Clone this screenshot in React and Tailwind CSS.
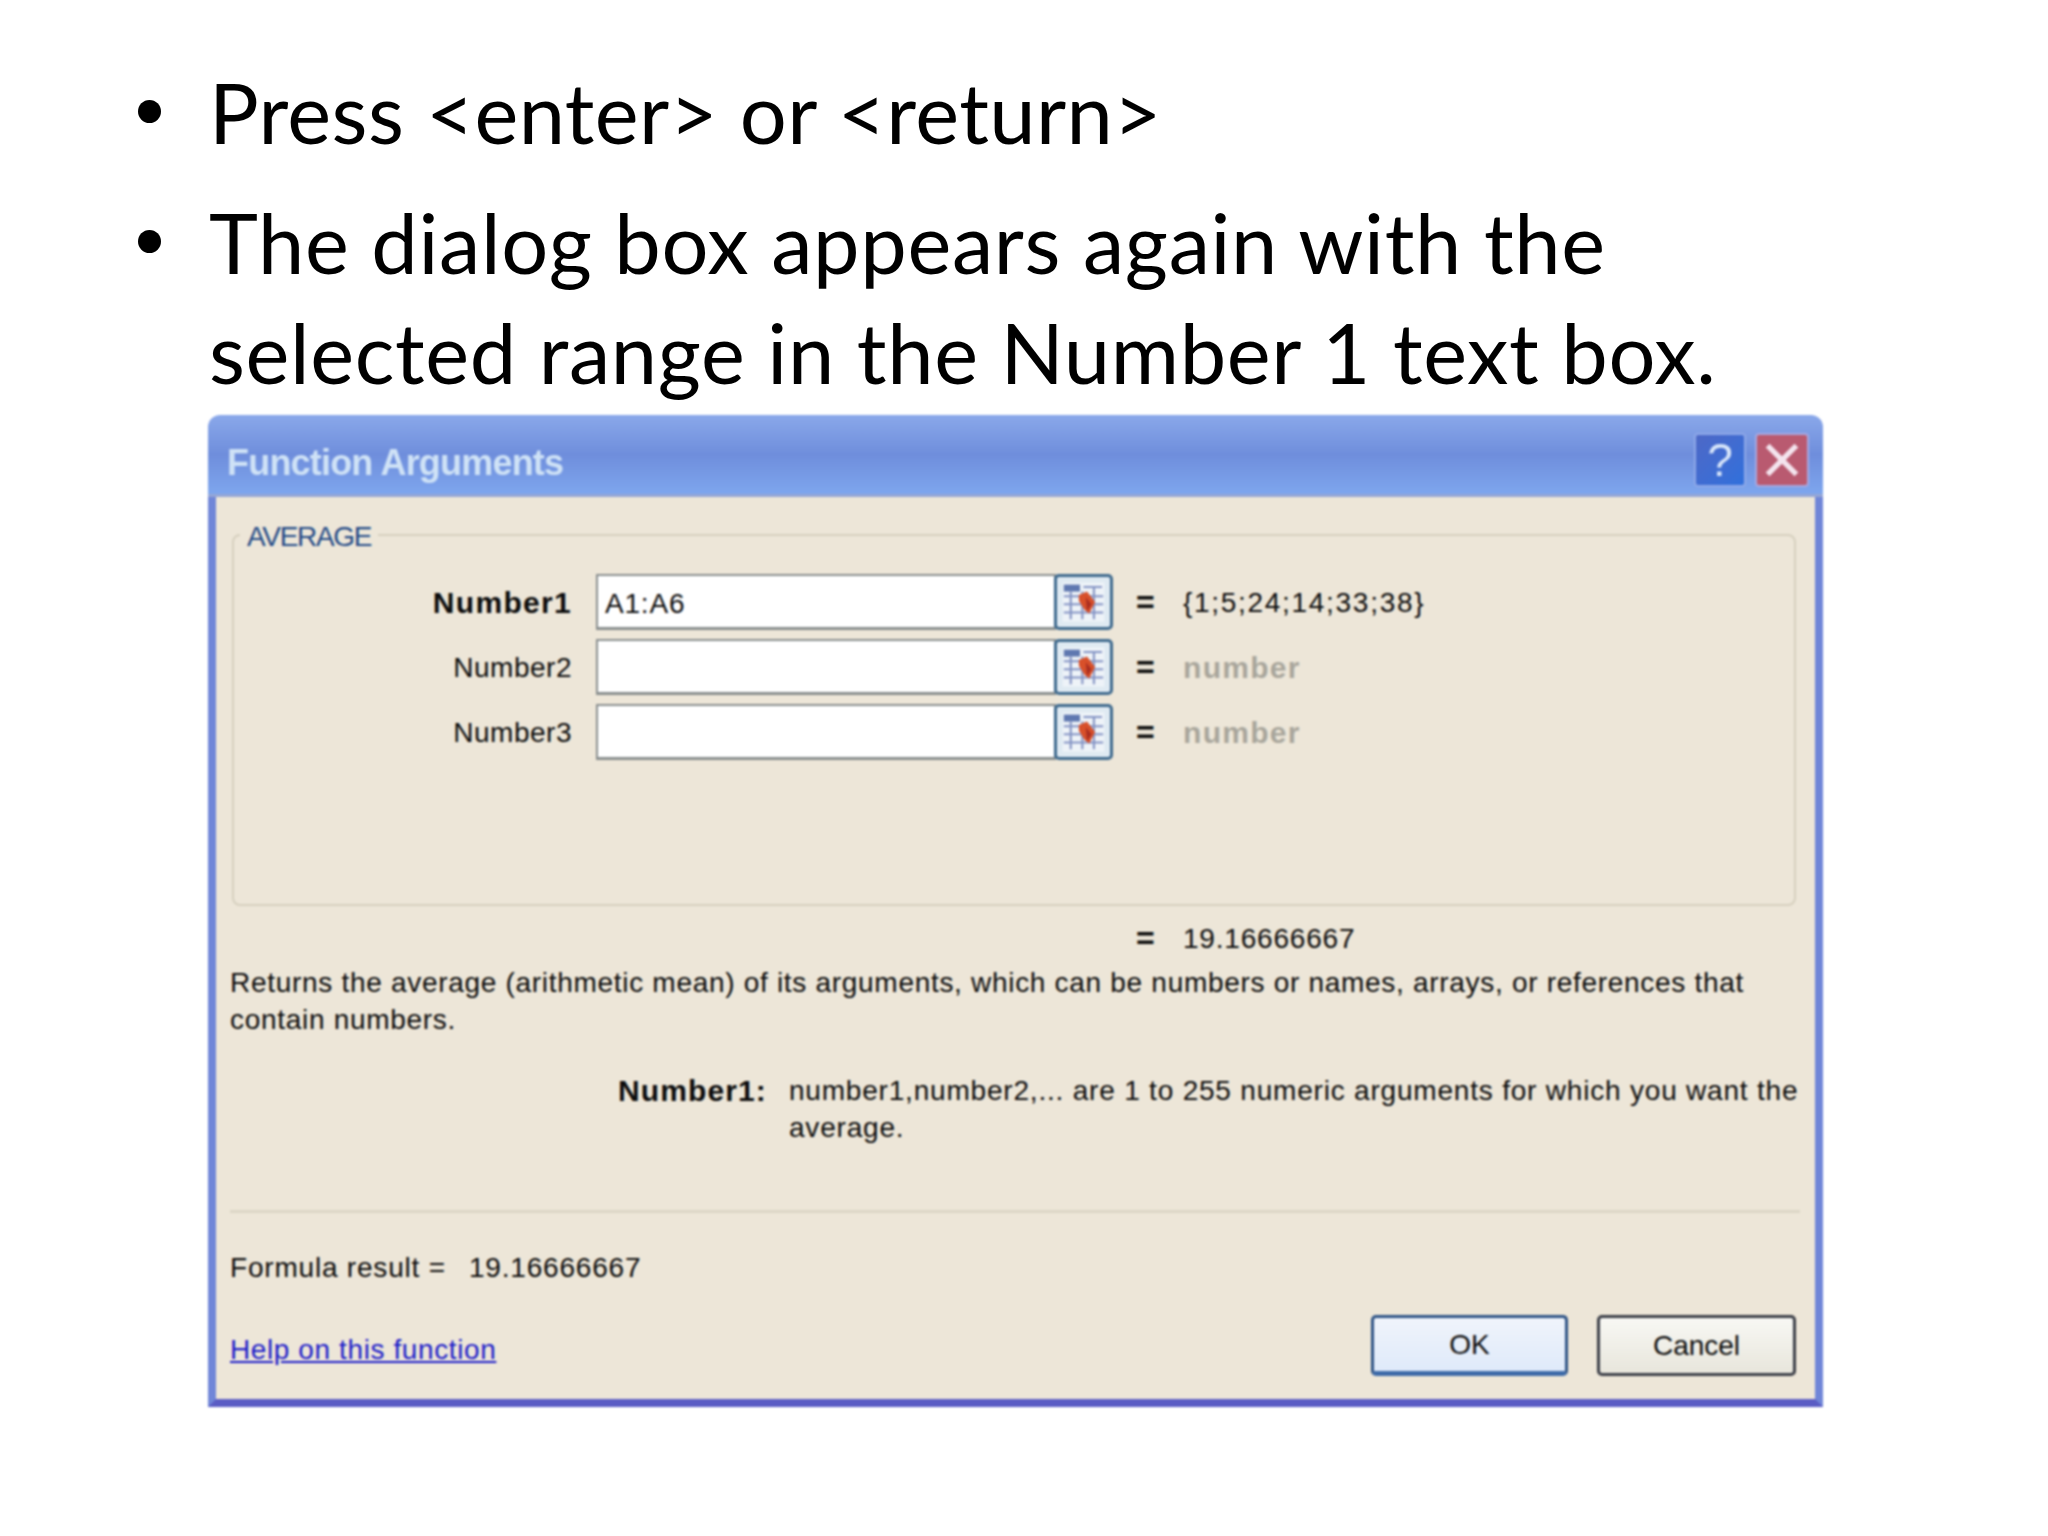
import React from 'react';

const Bullet = ({ children, className }) => (
  <div className={`flex ${className}`}>
    <span className="w-[75px] shrink-0">
      <span className="block ml-[4px] mt-[43px] w-[23px] h-[23px] rounded-full bg-black" />
    </span>
    <p>{children}</p>
  </div>
);

const RefButton = () => (
  <button className="w-[59px] h-[56px] shrink-0 -ml-[2px] rounded-[5px] border-[3px] border-[#3f6a8e] bg-[#dfeaf2] p-[3px]">
    <svg viewBox="0 0 40 38" className="w-full h-full">
      <rect x="2" y="2" width="36" height="34" fill="#eef3f8" />
      <rect x="3" y="4" width="14" height="6" fill="#5f78b0" />
      <path d="M20 6h16M3 14h34M3 21h34M3 28h34M9 10v24M19 10v24M29 6v28" stroke="#8494c4" strokeWidth="1.8" fill="none" />
      <path d="M16 13l7-3 7 9-5 10-4-3-5-8z" fill="#d8502a" />
      <path d="M22 15l5 6-4 6z" fill="#a92e22" />
    </svg>
  </button>
);

const ArgRow = ({ label, bold, value, placeholder }) => (
  <div className="flex items-center h-[56px]">
    <span className={`w-[338px] shrink-0 text-right ${bold ? 'font-bold text-[30px] tracking-[1.3px]' : 'tracking-[0.5px]'}`}>{label}</span>
    <div className="ml-[24px] w-[460px] h-[56px] shrink-0 bg-white border-[2px] border-[#8a8f8f] border-b-[3px] flex items-center pl-[7px] pt-[4px] tracking-[0.8px]">
      {value}
    </div>
    <RefButton />
    <span className="ml-[23px] w-[47px] shrink-0 font-bold text-[32px]">=</span>
    {placeholder ? (
      <span className="text-[#a9a69c] font-bold text-[30px] tracking-[1.3px]">number</span>
    ) : (
      <span className="tracking-[1.7px]">{'{1;5;24;14;33;38}'}</span>
    )}
  </div>
);

export default function App() {
  return (
    <div className="w-[2048px] h-[1536px] bg-white overflow-hidden font-['Lato','Noto_Sans',sans-serif] text-black">
      <div className="pt-[57px] pl-[134px] text-[83px] leading-[110px] tracking-[0.4px]">
        <Bullet>Press &lt;enter&gt; or &lt;return&gt;</Bullet>
        <Bullet className="mt-[20px] tracking-[0.65px]">
          The dialog box appears again with the
          <br />
          selected range in the Number 1 text box.
        </Bullet>
      </div>

      {/* Dialog */}
      <div className="ml-[208px] mt-[8px] w-[1615px] h-[992px] flex flex-col blur-[0.8px] font-['Liberation_Sans',sans-serif] text-[28px] leading-[37px] text-[#0c0c0c]">
        <div className="h-[82px] shrink-0 rounded-t-[12px] bg-gradient-to-b from-[#8aa8ea] via-[#6f8edc] to-[#7ea6ee] border-b-[3px] border-[#95a6d6] flex items-center pt-[10px] pl-[19px] pr-[14px]">
          <span className="flex-1 pt-[6px] font-bold text-[36px] text-[#cfe2f6] tracking-[-0.8px]">Function Arguments</span>
          <button className="w-[52px] h-[54px] rounded-[4px] bg-gradient-to-br from-[#4d68c6] to-[#2f70dc] border-[2px] border-[#8ea8e8] text-[#d8e6fa] text-[46px] leading-none">?</button>
          <button className="ml-[9px] w-[54px] h-[54px] rounded-[4px] bg-[#b95a70] border-[2px] border-[#a8a8e0] flex items-center justify-center">
            <svg viewBox="0 0 30 30" className="w-[36px] h-[36px]">
              <path d="M3 3l24 24M27 3L3 27" stroke="#f4e4ee" strokeWidth="4.5" />
            </svg>
          </button>
        </div>

        <div className="flex-1 bg-[#ede6d8] border-x-[8px] border-b-[8px] border-x-[#7086d8] border-b-[#5a5cc4] px-[14px] flex flex-col">
          {/* Group box */}
          <div className="relative mt-[37px] ml-[2px] w-[1564px] h-[372px] shrink-0 rounded-[8px] border-[2px] border-[#d6d0bf] pt-[38px]">
            <span className="absolute left-[6px] -top-[18px] px-[7px] bg-[#ede6d8] text-[#234a86] tracking-[-1.3px]">AVERAGE</span>
            <div className="flex flex-col gap-[9px]">
              <ArgRow label="Number1" bold value="A1:A6" />
              <ArgRow label="Number2" placeholder />
              <ArgRow label="Number3" placeholder />
            </div>
          </div>

          <div className="mt-[14px] pl-[906px] flex h-[37px]">
            <span className="w-[47px] font-bold text-[32px]">=</span>
            <span className="tracking-[0.8px]">19.16666667</span>
          </div>
          <p className="mt-[7px] tracking-[0.7px] whitespace-nowrap">
            Returns the average (arithmetic mean) of its arguments, which can be numbers or names, arrays, or references that
            <br />
            contain numbers.
          </p>
          <div className="mt-[34px] flex">
            <span className="ml-[388px] w-[171px] shrink-0 font-bold text-[30px] tracking-[1.1px]">Number1:</span>
            <p className="tracking-[0.8px] whitespace-nowrap">
              number1,number2,... are 1 to 255 numeric arguments for which you want the
              <br />
              average.
            </p>
          </div>

          <div className="mt-[64px] h-[3px] w-[1570px] bg-[#dcd6c6]" />

          <div className="mt-[36px] flex">
            <span className="w-[239px] shrink-0 tracking-[0.8px]">Formula result =</span>
            <span className="tracking-[0.8px]">19.16666667</span>
          </div>

          <div className="mt-[29px] flex items-start">
            <a className="flex-1 mt-[16px] text-[#1c1cc8] underline tracking-[0.6px]">Help on this function</a>
            <button className="w-[197px] h-[61px] rounded-[5px] border-[3px] border-[#2f5486] border-b-[5px] border-b-[#3d6aa8] bg-gradient-to-b from-[#f0f4fb] to-[#dfeafa]">OK</button>
            <button className="ml-[29px] w-[199px] h-[61px] rounded-[5px] border-[3px] border-[#3c3f48] bg-gradient-to-b from-[#f8f8f4] to-[#e8e6dc]">Cancel</button>
            <span className="w-[5px] shrink-0" />
          </div>
        </div>
      </div>
    </div>
  );
}
